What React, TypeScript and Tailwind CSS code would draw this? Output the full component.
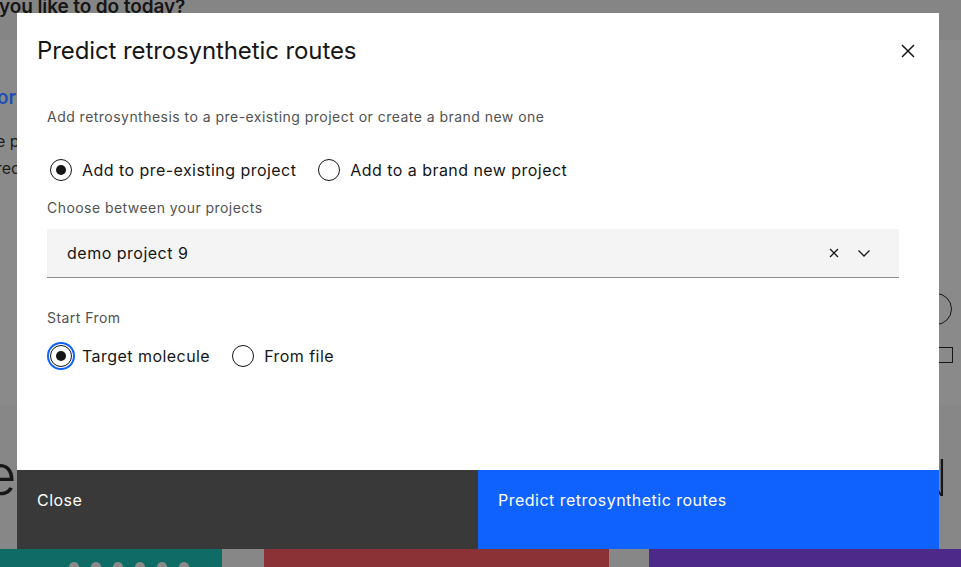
import React from "react";

function Radio({ checked, focus, label }: { checked?: boolean; focus?: boolean; label: string }) {
  return (
    <label className="flex items-center gap-[10px] h-[24px]">
      <span
        className={
          "flex items-center justify-center w-[22px] h-[22px] rounded-full border border-[#161616] bg-white " +
          (focus ? "ring-2 ring-[#0f62fe] ring-offset-1 ring-offset-white" : "")
        }
      >
        {checked && <span className="block w-[10px] h-[10px] rounded-full bg-[#161616]" />}
      </span>
      <span className="text-[16px] leading-[24px] text-[#161616] tracking-[0.45px]">{label}</span>
    </label>
  );
}

export default function App() {
  const font = { fontFamily: "Inter, 'Noto Sans', sans-serif" };
  return (
    <div className="relative w-[961px] h-[567px] overflow-hidden bg-[#8a8a8a]" style={font}>
      {/* background page (dimmed) */}
      <div className="flex flex-col h-full">
        <div className="h-[40px] bg-[#858585] relative">
          <div className="absolute left-[-1px] top-[-7px] text-[19px] font-semibold text-[#161616] whitespace-nowrap tracking-[-0.1px]">
            you like to do today?
          </div>
        </div>
        <div className="relative flex-1 bg-[#8a8a8a]">
          <div className="absolute left-[-3px] top-[44px] text-[19px] font-semibold text-[#1f4fb5]">or</div>
          <div className="absolute left-[-4px] top-[88px] text-[16px] leading-[27px] text-[#1c1c1c]">
            <div>e p</div>
            <div>rec</div>
          </div>
          <div className="absolute left-[920px] top-[253px] w-[32px] h-[32px] rounded-full border-[1.5px] border-[#161616]" />
          <div className="absolute left-[935px] top-[307px] w-[18px] h-[16px] border-[1.5px] border-[#161616]" />
        </div>
        <div className="relative h-[144px] bg-[#878787]">
          <div className="absolute left-[-16px] top-[42px] text-[56px] font-light leading-none text-[#161616]">e</div>
          <div className="absolute left-[910px] top-[48px] text-[50px] font-extralight leading-none text-[#161616]">N</div>
        </div>
        <div className="h-[18px] flex">
          <div className="w-[222px] bg-[#0f6b66] flex gap-[12px] pl-[69px] pt-[13px]">
            {[0, 1, 2, 3, 4, 5].map((i) => (
              <span key={i} className="block w-[10px] h-[10px] rounded-full bg-[#8a8a8a]" />
            ))}
          </div>
          <div className="w-[42px] bg-[#878787]" />
          <div className="w-[345px] bg-[#8b3236]" />
          <div className="w-[40px] bg-[#878787]" />
          <div className="flex-1 bg-[#4d2a89]" />
        </div>
      </div>

      {/* modal */}
      <div className="absolute left-[17px] top-[13px] w-[922px] h-[536px] bg-white flex flex-col">
        <div className="flex items-start justify-between pt-[22px] pl-[20px] pr-[24px]">
          <h2 className="text-[24px] leading-[32px] text-[#161616] font-normal tracking-[-0.1px]">Predict retrosynthetic routes</h2>
          <svg width="14" height="14" viewBox="0 0 14 14" className="mt-[9px]" fill="none" stroke="#161616" strokeWidth="1.5">
            <path d="M1 1L13 13M13 1L1 13" />
          </svg>
        </div>
        <div className="flex flex-col pl-[30px] pr-[40px] mt-[40px]">
          <p className="text-[14px] leading-[20px] text-[#525252] tracking-[0.47px]">
            Add retrosynthesis to a pre-existing project or create a brand new one
          </p>
          <div className="flex items-center gap-[22px] mt-[31px] pl-[3px]">
            <Radio checked label="Add to pre-existing project" />
            <Radio label="Add to a brand new project" />
          </div>
          <p className="mt-[16px] text-[14px] leading-[20px] text-[#525252] tracking-[0.45px]">
            Choose between your projects
          </p>
          <div className="mt-[11px] h-[49px] bg-[#f4f4f4] border-b border-[#8d8d8d] flex items-center pl-[20px] pr-[29px]">
            <span className="flex-1 text-[16px] text-[#161616] tracking-[0.5px]">demo project 9</span>
            <svg width="10" height="10" viewBox="0 0 10 10" fill="none" stroke="#161616" strokeWidth="1.3">
              <path d="M1 1L9 9M9 1L1 9" />
            </svg>
            <svg width="12" height="7" viewBox="0 0 12 7" className="ml-[19px]" fill="none" stroke="#161616" strokeWidth="1.3">
              <path d="M0.5 0.5L6 6L11.5 0.5" />
            </svg>
          </div>
          <p className="mt-[30px] text-[14px] leading-[20px] text-[#525252] tracking-[0.45px]">Start From</p>
          <div className="flex items-center gap-[22px] mt-[16px] pl-[3px]">
            <Radio checked focus label="Target molecule" />
            <Radio label="From file" />
          </div>
        </div>
        <div className="mt-auto h-[79px] flex">
          <button className="flex-1 bg-[#393939] text-white text-[16px] leading-[22px] text-left pl-[20px] pt-[19px] items-start flex tracking-[0.45px]">
            Close
          </button>
          <button className="flex-1 bg-[#0f62fe] text-white text-[16px] leading-[22px] text-left pl-[20px] pt-[19px] items-start flex tracking-[0.48px]">
            Predict retrosynthetic routes
          </button>
        </div>
      </div>
    </div>
  );
}
